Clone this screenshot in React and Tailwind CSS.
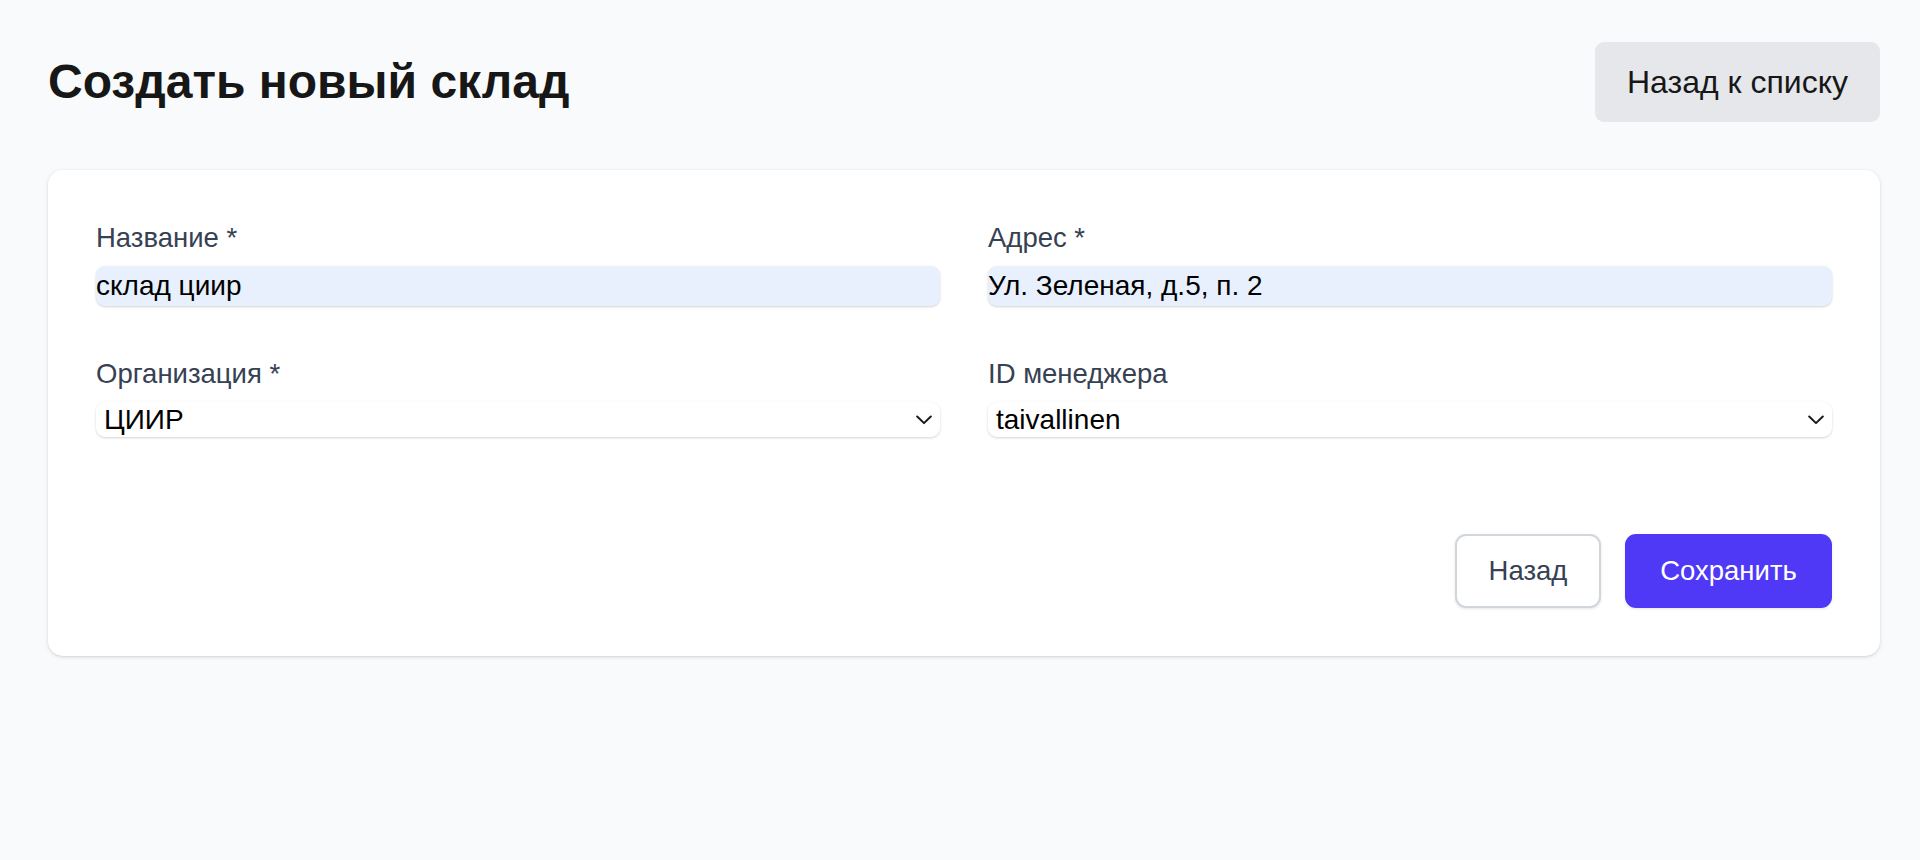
import { useState } from 'react'

const font = "font-['Liberation_Sans',Arial,sans-serif]"

function Chevron() {
  return (
    <svg
      className="pointer-events-none absolute right-[8px] top-1/2 -translate-y-1/2"
      width="16"
      height="10"
      viewBox="0 0 16 10"
      fill="none"
    >
      <path d="M1.2 1.5l6.8 6.6 6.8-6.6" stroke="#1a1a1a" strokeWidth="2" strokeLinecap="round" strokeLinejoin="round" />
    </svg>
  )
}

function Field({ label, children }) {
  return (
    <div className="flex flex-col">
      <label className="text-[27.5px] leading-[40px] text-gray-700 mb-2">{label}</label>
      {children}
    </div>
  )
}

function TextInput({ value, onChange }) {
  return (
    <input
      type="text"
      value={value}
      onChange={(e) => onChange(e.target.value)}
      className="h-[40px] w-full rounded-[9px] bg-[#e8f0fe] px-0 text-[28px] text-black shadow-[0_1px_3px_rgba(0,0,0,0.12),0_1px_2px_rgba(0,0,0,0.06)] focus:outline-none"
    />
  )
}

function Select({ value, onChange, options }) {
  return (
    <div className="relative">
      <select
        value={value}
        onChange={(e) => onChange(e.target.value)}
        className="h-[35px] w-full appearance-none rounded-[9px] bg-white pl-[8px] pr-8 text-[28px] leading-[35px] text-black shadow-[0_1px_3px_rgba(0,0,0,0.12),0_1px_2px_rgba(0,0,0,0.06)] focus:outline-none"
      >
        {options.map((o) => (
          <option key={o} value={o}>{o}</option>
        ))}
      </select>
      <Chevron />
    </div>
  )
}

export default function App() {
  const [name, setName] = useState('склад циир')
  const [address, setAddress] = useState('Ул. Зеленая, д.5, п. 2')
  const [org, setOrg] = useState('ЦИИР')
  const [manager, setManager] = useState('taivallinen')

  return (
    <div className={`min-h-screen bg-gray-50 pt-[42px] pl-12 pr-10 ${font}`}>
      <div className="flex h-[80px] items-center justify-between">
        <h1 className="text-[48px] font-bold leading-none text-[#171717]">Создать новый склад</h1>
        <button className="h-[80px] w-[285px] rounded-[9px] bg-gray-200 text-[32px] text-[#171717]">
          Назад к списку
        </button>
      </div>

      <div className="mt-12 rounded-[15px] bg-white p-12 shadow-[0_1px_4px_rgba(0,0,0,0.12),0_1px_2px_rgba(0,0,0,0.06)]">
        <div className="grid grid-cols-2 gap-12">
          <Field label="Название *">
            <TextInput value={name} onChange={setName} />
          </Field>
          <Field label="Адрес *">
            <TextInput value={address} onChange={setAddress} />
          </Field>
          <Field label="Организация *">
            <Select value={org} onChange={setOrg} options={['ЦИИР']} />
          </Field>
          <Field label="ID менеджера">
            <Select value={manager} onChange={setManager} options={['taivallinen']} />
          </Field>
        </div>

        <div className="mt-[97px] flex justify-end gap-[24px]">
          <button className="h-[74px] w-[146px] rounded-[11px] border-2 border-gray-300 bg-white text-[27.5px] text-gray-700 shadow-[0_1px_3px_rgba(0,0,0,0.1)]">
            Назад
          </button>
          <button className="h-[74px] w-[207px] rounded-[11px] bg-indigo-600 text-[27.5px] text-white shadow-[0_1px_3px_rgba(0,0,0,0.1)]">
            Сохранить
          </button>
        </div>
      </div>
    </div>
  )
}
